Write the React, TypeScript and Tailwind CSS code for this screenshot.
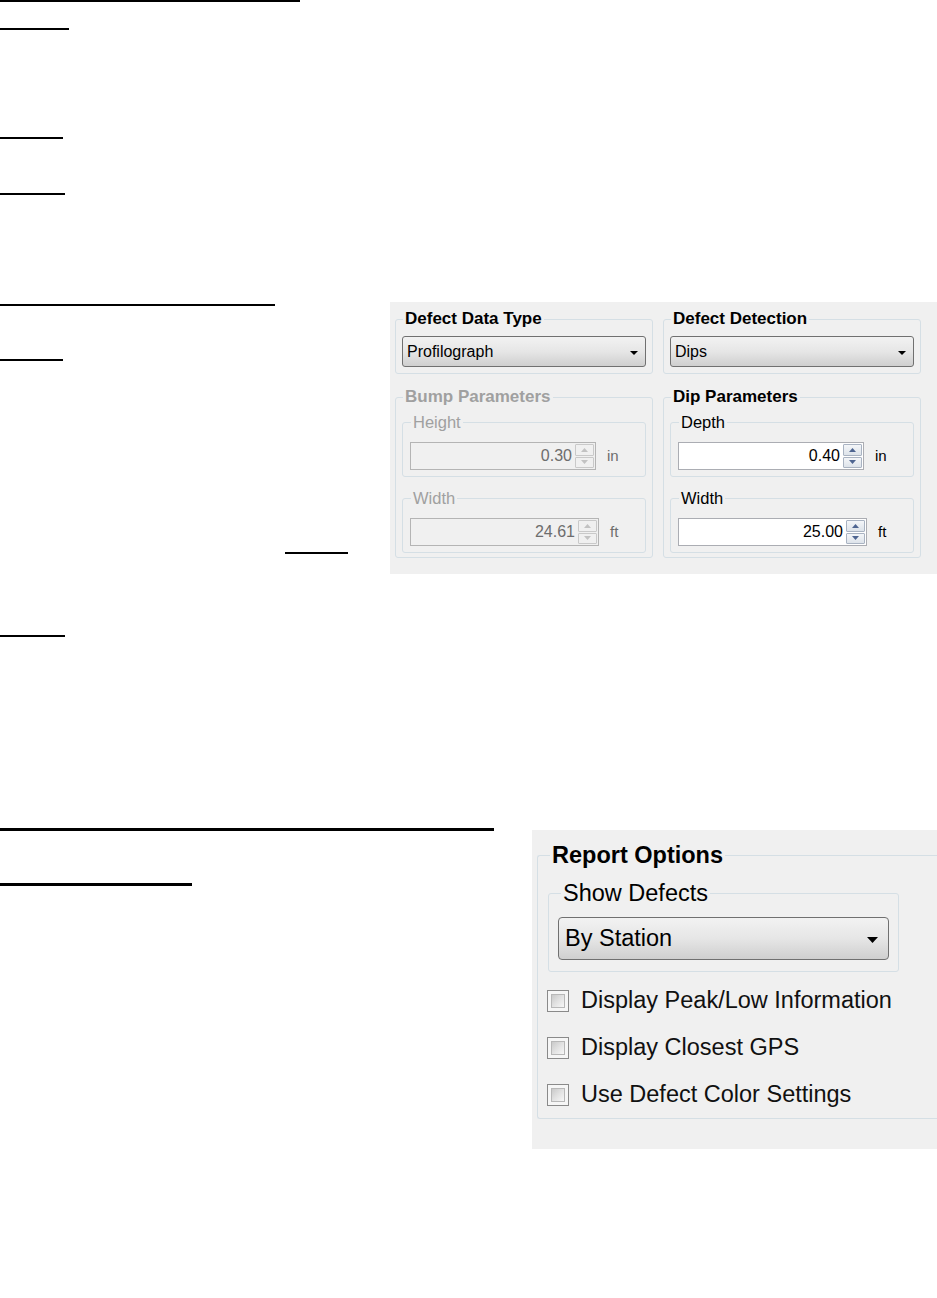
import React from "react";

const Arrow = ({ big }: { big?: boolean }) =>
  big ? (
    <svg width="11" height="6" viewBox="0 0 11 6" className="mt-[3px]">
      <path d="M0 0H11L5.5 6Z" fill="#000" />
    </svg>
  ) : (
    <svg width="8" height="4" viewBox="0 0 8 4" className="mt-[2px]">
      <path d="M0 0H8L4 4Z" fill="#000" />
    </svg>
  );

const Combo = ({ value }: { value: string }) => (
  <div className="flex h-[31px] w-[244px] items-center justify-between rounded-[3px] border border-[#707070] bg-gradient-to-b from-[#f2f2f2] via-[#e6e6e6] to-[#cfcfcf] pl-[4px] pr-[7px] text-[16px] leading-none">
    <span>{value}</span>
    <Arrow />
  </div>
);

const Spin = ({ disabled }: { disabled?: boolean }) => {
  const c = disabled ? "#c2c2c2" : "#4e6591";
  return (
    <div className="flex h-full w-[21px] flex-col gap-[1px] p-[1px]">
      <div className={`flex flex-1 items-center justify-center rounded-[1px] border ${disabled ? "border-[#c9c9c9] bg-[#f0f0f0]" : "border-[#a9b3c2] bg-gradient-to-b from-[#f4f6f9] to-[#dde3ea]"}`}>
        <svg width="7" height="4" viewBox="0 0 7 4">
          <path d="M3.5 0L7 4H0Z" fill={c} />
        </svg>
      </div>
      <div className={`flex flex-1 items-center justify-center rounded-[1px] border ${disabled ? "border-[#c9c9c9] bg-[#f0f0f0]" : "border-[#a9b3c2] bg-gradient-to-b from-[#f4f6f9] to-[#dde3ea]"}`}>
        <svg width="7" height="4" viewBox="0 0 7 4">
          <path d="M0 0H7L3.5 4Z" fill={c} />
        </svg>
      </div>
    </div>
  );
};

const NumRow = ({ value, unit, disabled, wide }: { value: string; unit: string; disabled?: boolean; wide?: boolean }) => (
  <div className="flex items-center">
    <div className={`flex h-[28px] items-center border ${wide ? "w-[189px]" : "w-[186px]"} ${disabled ? "border-[#b4b4b4] bg-[#f0f0f0] text-[#6d6d6d]" : "border-[#abadb3] bg-white text-black"}`}>
      <span className="flex-1 pr-[2px] text-right text-[16px] leading-none">{value}</span>
      <Spin disabled={disabled} />
    </div>
    <span className={`ml-[11px] text-[15px] ${disabled ? "text-[#6d6d6d]" : "text-black"}`}>{unit}</span>
  </div>
);

const SubGroup = ({ title, disabled, children }: { title: string; disabled?: boolean; children: React.ReactNode }) => (
  <fieldset className="w-[244px] rounded-[3px] border border-[#d5dfe5] pb-[6px] pl-[7px] pt-[11px]">
    <legend className={`ml-[1px] px-[2px] text-[16.5px] leading-[18px] ${disabled ? "text-[#a0a0a0]" : "text-black"}`}>{title}</legend>
    {children}
  </fieldset>
);

const ParamGroup = ({ title, disabled, a, b }: { title: string; disabled?: boolean; a: React.ReactNode; b: React.ReactNode }) => (
  <fieldset className="flex w-[258px] flex-col gap-[12px] rounded-[3px] border border-[#d5dfe5] pb-[4px] pl-[6px] pt-[7px]">
    <legend className={`ml-[1px] px-[2px] text-[17px] font-bold leading-[18px] ${disabled ? "text-[#a0a0a0]" : "text-black"}`}>{title}</legend>
    {a}
    {b}
  </fieldset>
);

const TypeGroup = ({ title, value }: { title: string; value: string }) => (
  <fieldset className="w-[258px] rounded-[3px] border border-[#d5dfe5] pb-[6px] pl-[6px] pt-[8px]">
    <legend className="ml-[1px] px-[2px] text-[17px] font-bold leading-[18px]">{title}</legend>
    <Combo value={value} />
  </fieldset>
);

const DefectPanel = () => (
  <div className="w-[547px] bg-[#f0f0f0] pb-[16px] pl-[5px] pt-[8px] text-black">
    <div className="flex gap-[10px]">
      <div className="flex flex-col gap-[14px]">
        <TypeGroup title="Defect Data Type" value="Profilograph" />
        <ParamGroup
          title="Bump Parameters"
          disabled
          a={
            <SubGroup title="Height" disabled>
              <NumRow value="0.30" unit="in" disabled />
            </SubGroup>
          }
          b={
            <SubGroup title="Width" disabled>
              <NumRow value="24.61" unit="ft" disabled wide />
            </SubGroup>
          }
        />
      </div>
      <div className="flex flex-col gap-[14px]">
        <TypeGroup title="Defect Detection" value="Dips" />
        <ParamGroup
          title="Dip Parameters"
          a={
            <SubGroup title="Depth">
              <NumRow value="0.40" unit="in" />
            </SubGroup>
          }
          b={
            <SubGroup title="Width">
              <NumRow value="25.00" unit="ft" wide />
            </SubGroup>
          }
        />
      </div>
    </div>
  </div>
);

const Check = ({ label }: { label: string }) => (
  <div className="flex h-[47px] items-center">
    <div className="h-[22px] w-[22px] border border-[#8a8a8a] bg-[#f6f6f6] p-[3px]">
      <div className="h-full w-full border border-[#b8b8b8] bg-gradient-to-br from-[#c9c9c9] via-[#e2e2e2] to-[#f7f7f7]" />
    </div>
    <span className="ml-[12px] text-[23.5px] leading-none text-[#111]">{label}</span>
  </div>
);

const ReportPanel = () => (
  <div className="w-[405px] overflow-hidden bg-[#f0f0f0] pb-[30px] pl-[5px] pt-[12px] text-black">
    <fieldset className="w-[420px] rounded-l-[3px] border border-r-0 border-[#d5dfe5] pl-[10px] pt-[11px]">
      <legend className="ml-[2px] px-[2px] text-[23.5px] font-bold leading-[27px]">Report Options</legend>
      <fieldset className="w-[351px] rounded-[3px] border border-[#d5dfe5] pb-[11px] pl-[9px] pt-[10px]">
        <legend className="ml-[3px] px-[2px] text-[23.5px] leading-[27px]">Show Defects</legend>
        <div className="flex h-[43px] w-[331px] items-center justify-between rounded-[4px] border border-[#707070] bg-gradient-to-b from-[#f2f2f2] via-[#e6e6e6] to-[#cfcfcf] pl-[6px] pr-[10px] text-[23.5px] leading-none">
          <span>By Station</span>
          <Arrow big />
        </div>
      </fieldset>
      <div className="-ml-[1px] mt-[5px] flex flex-col">
        <Check label="Display Peak/Low Information" />
        <Check label="Display Closest GPS" />
        <Check label="Use Defect Color Settings" />
      </div>
    </fieldset>
  </div>
);

export default function App() {
  return (
    <div className="min-h-[1298px] w-[937px] bg-white font-['Liberation_Sans',Arial,sans-serif]">
      <div className="h-[2px] w-[300px] bg-black" />
      <div className="mt-[26px] h-[2px] w-[69px] bg-black" />
      <div className="mt-[107px] h-[2px] w-[63px] bg-black" />
      <div className="mt-[54px] h-[2px] w-[65px] bg-black" />

      <div className="mt-[107px] flex">
        <div className="flex w-[390px] flex-col">
          <div className="mt-[2px] h-[2px] w-[275px] bg-black" />
          <div className="mt-[53px] h-[2px] w-[63px] bg-black" />
          <div className="ml-[285px] mt-[191px] h-[2px] w-[63px] bg-black" />
          <div className="mt-[81px] h-[2px] w-[65px] bg-black" />
        </div>
        <div className="self-start">
          <DefectPanel />
        </div>
      </div>

      <div className="mt-[191px] flex">
        <div className="flex w-[532px] flex-col">
          <div className="h-[3px] w-[494px] bg-black" />
          <div className="mt-[52px] h-[3px] w-[192px] bg-black" />
        </div>
        <div className="mt-[2px] self-start">
          <ReportPanel />
        </div>
      </div>
    </div>
  );
}
